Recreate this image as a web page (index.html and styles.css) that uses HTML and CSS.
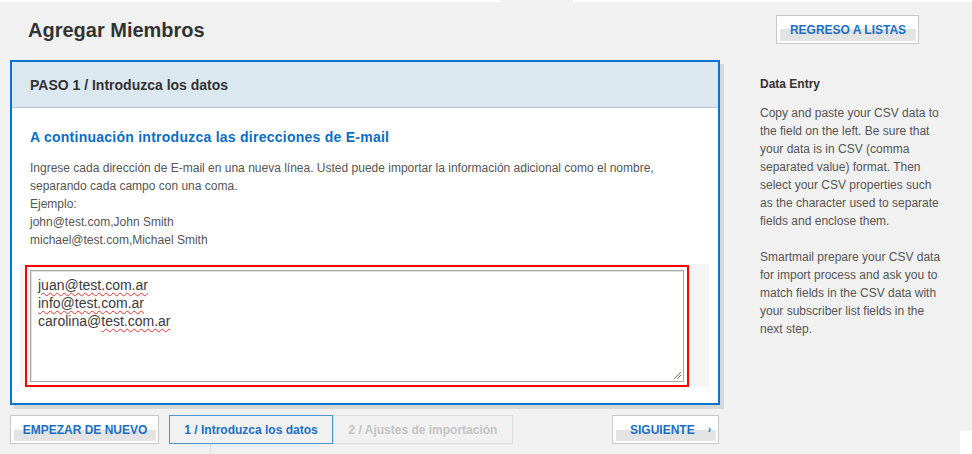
FILE: index.html
```html
<!DOCTYPE html>
<html lang="es">
<head>
  <meta charset="UTF-8" />
  <title>Agregar Miembros</title>
  <link rel="stylesheet" href="styles.css">
</head>
<body>
  <div class="topline">
    <div class="seg"></div>
    <div class="gap"></div>
    <div class="seg grow"></div>
  </div>

  <div class="header">
    <h1>Agregar Miembros</h1>
    <a href="#" class="btn back-btn"><span>REGRESO A LISTAS</span></a>
  </div>

  <div class="content">
    <div class="main">
      <div class="panel">
        <div class="panel-head">PASO 1 / Introduzca los datos</div>
        <div class="panel-body">
          <h3>A continuación introduzca las direcciones de E-mail</h3>
          <p>
            Ingrese cada dirección de E-mail en una nueva línea. Usted puede importar la información adicional como el nombre, separando cada campo con una coma.<br>
            Ejemplo:<br>
            john@test.com,John Smith<br>
            michael@test.com,Michael Smith
          </p>
          <div class="input-wrap">
            <div class="input-frame">
              <div class="textbox">
                <span class="typo">juan@test.com.ar</span><br>
                <span class="typo">info@test.com.ar</span><br>
                carolina@<span class="typo">test.com.ar</span>
                <svg class="grip" width="9" height="9" viewBox="0 0 9 9">
                  <line x1="1" y1="8" x2="8" y2="1" stroke="#777" stroke-width="1"/>
                  <line x1="4" y1="8" x2="8" y2="4" stroke="#777" stroke-width="1"/>
                </svg>
              </div>
            </div>
          </div>
        </div>
      </div>

      <div class="actions">
        <a href="#" class="btn restart-btn"><span>EMPEZAR DE NUEVO</span></a>
        <div class="steps">
          <div class="step active">1 / Introduzca los datos</div>
          <div class="step">2 / Ajustes de importación</div>
        </div>
        <a href="#" class="btn next-btn"><span>SIGUIENTE <i>›</i></span></a>
      </div>
      <div class="footer-line"></div>
    </div>

    <div class="side">
      <h4>Data Entry</h4>
      <p>Copy and paste your CSV data to the field on the left. Be sure that your data is in CSV (comma separated value) format. Then select your CSV properties such as the character used to separate fields and enclose them.</p>
      <p>Smartmail prepare your CSV data for import process and ask you to match fields in the CSV data with your subscriber list fields in the next step.</p>
      <div class="corner"></div>
    </div>
  </div>
</body>
</html>
```

FILE: styles.css
```css
* { box-sizing: border-box; }
html, body {
  margin: 0;
  padding: 0;
}
body {
  font-family: "Liberation Sans", Arial, sans-serif;
  background: #f1f1f1;
  color: #555;
  width: 972px;
  height: 454px;
  overflow: hidden;
}

.topline {
  display: flex;
  height: 2px;
}
.topline .seg {
  width: 500px;
  background: #fff;
}
.topline .gap {
  width: 73px;
}
.topline .grow {
  flex: 1;
}

.header {
  display: flex;
  justify-content: space-between;
  align-items: flex-start;
  height: 58px;
  padding: 13px 53px 0 28px;
}
.header h1 {
  margin: 3px 0 0;
  font-size: 20px;
  line-height: 24px;
  color: #333;
}

.btn {
  display: flex;
  height: 29px;
  border: 1px solid #c8c8c8;
  background: #fff;
  padding: 2px 2px 2px 3px;
  text-decoration: none;
}
.btn span {
  flex: 1;
  display: flex;
  align-items: center;
  justify-content: center;
  background: linear-gradient(#fff 50%, #e3e3e3 50%);
  font-size: 12px;
  font-weight: bold;
  color: #1a6fc4;
}
.back-btn { width: 143px; }
.restart-btn { width: 149px; }
.next-btn { width: 107px; margin-left: auto; margin-right: 1px; }
.next-btn span {
  justify-content: flex-start;
  padding-left: 14px;
}
.next-btn i {
  font-style: normal;
  font-size: 10px;
  margin-left: 13px;
}

.content {
  display: flex;
  align-items: stretch;
  padding-left: 10px;
}
.main {
  width: 710px;
}

.panel {
  border: 2px solid #0775cf;
  background: #fff;
  box-shadow: 4px 4px 0 #d8d8d8;
}
.panel-head {
  height: 46px;
  background: #dce8f0;
  border-bottom: 1px solid #b9c7d2;
  padding-left: 18px;
  display: flex;
  align-items: center;
  font-size: 14px;
  font-weight: bold;
  color: #333;
}
.panel-body {
  padding: 20px 9px 16px 8px;
}
.panel-body h3 {
  margin: 0 0 13px 10px;
  font-size: 14px;
  line-height: 18px;
  letter-spacing: 0.25px;
  color: #0b6ec4;
}
.panel-body p {
  margin: 0 0 15px 10px;
  font-size: 12px;
  line-height: 18px;
}

.input-wrap {
  background: #f5f5f5;
  padding: 1px 20px 0 5px;
  height: 123px;
}
.input-frame {
  border: 2px solid #f00;
  background: #fff;
  padding: 3px;
}
.textbox {
  position: relative;
  height: 112px;
  border: 1px solid #a8a8a8;
  box-shadow: inset 1px 1px 0 #e2e2e2;
  padding: 5px 7px;
  font-size: 14px;
  line-height: 18px;
  color: #3a3a3a;
}
.typo {
  text-decoration: underline wavy #e03030;
  text-decoration-thickness: 1px;
  text-underline-offset: 2px;
}
.grip {
  position: absolute;
  right: 1px;
  bottom: 1px;
}

.actions {
  display: flex;
  margin-top: 10px;
}
.steps {
  display: flex;
  margin-left: 10px;
}
.step {
  height: 29px;
  width: 180px;
  border: 1px solid #dcdcdc;
  display: flex;
  align-items: center;
  justify-content: center;
  font-size: 12px;
  font-weight: bold;
  color: #c4c4c4;
}
.step.active {
  width: 164px;
  border-color: #4f93d1;
  color: #1a6fc4;
}
.footer-line {
  margin-left: 200px;
  height: 10px;
  border-left: 1px solid #dcdcdc;
}

.side {
  flex: 1;
  display: flex;
  flex-direction: column;
  padding-left: 40px;
}
.side h4 {
  margin: 15px 0 11px;
  font-size: 12px;
  line-height: 18px;
  color: #333;
}
.side p {
  width: 181px;
  margin: 0 0 18px;
  font-size: 12px;
  line-height: 18px;
}
.corner {
  margin-top: auto;
  margin-left: auto;
  width: 12px;
  height: 23px;
  background: #fff;
}
```
